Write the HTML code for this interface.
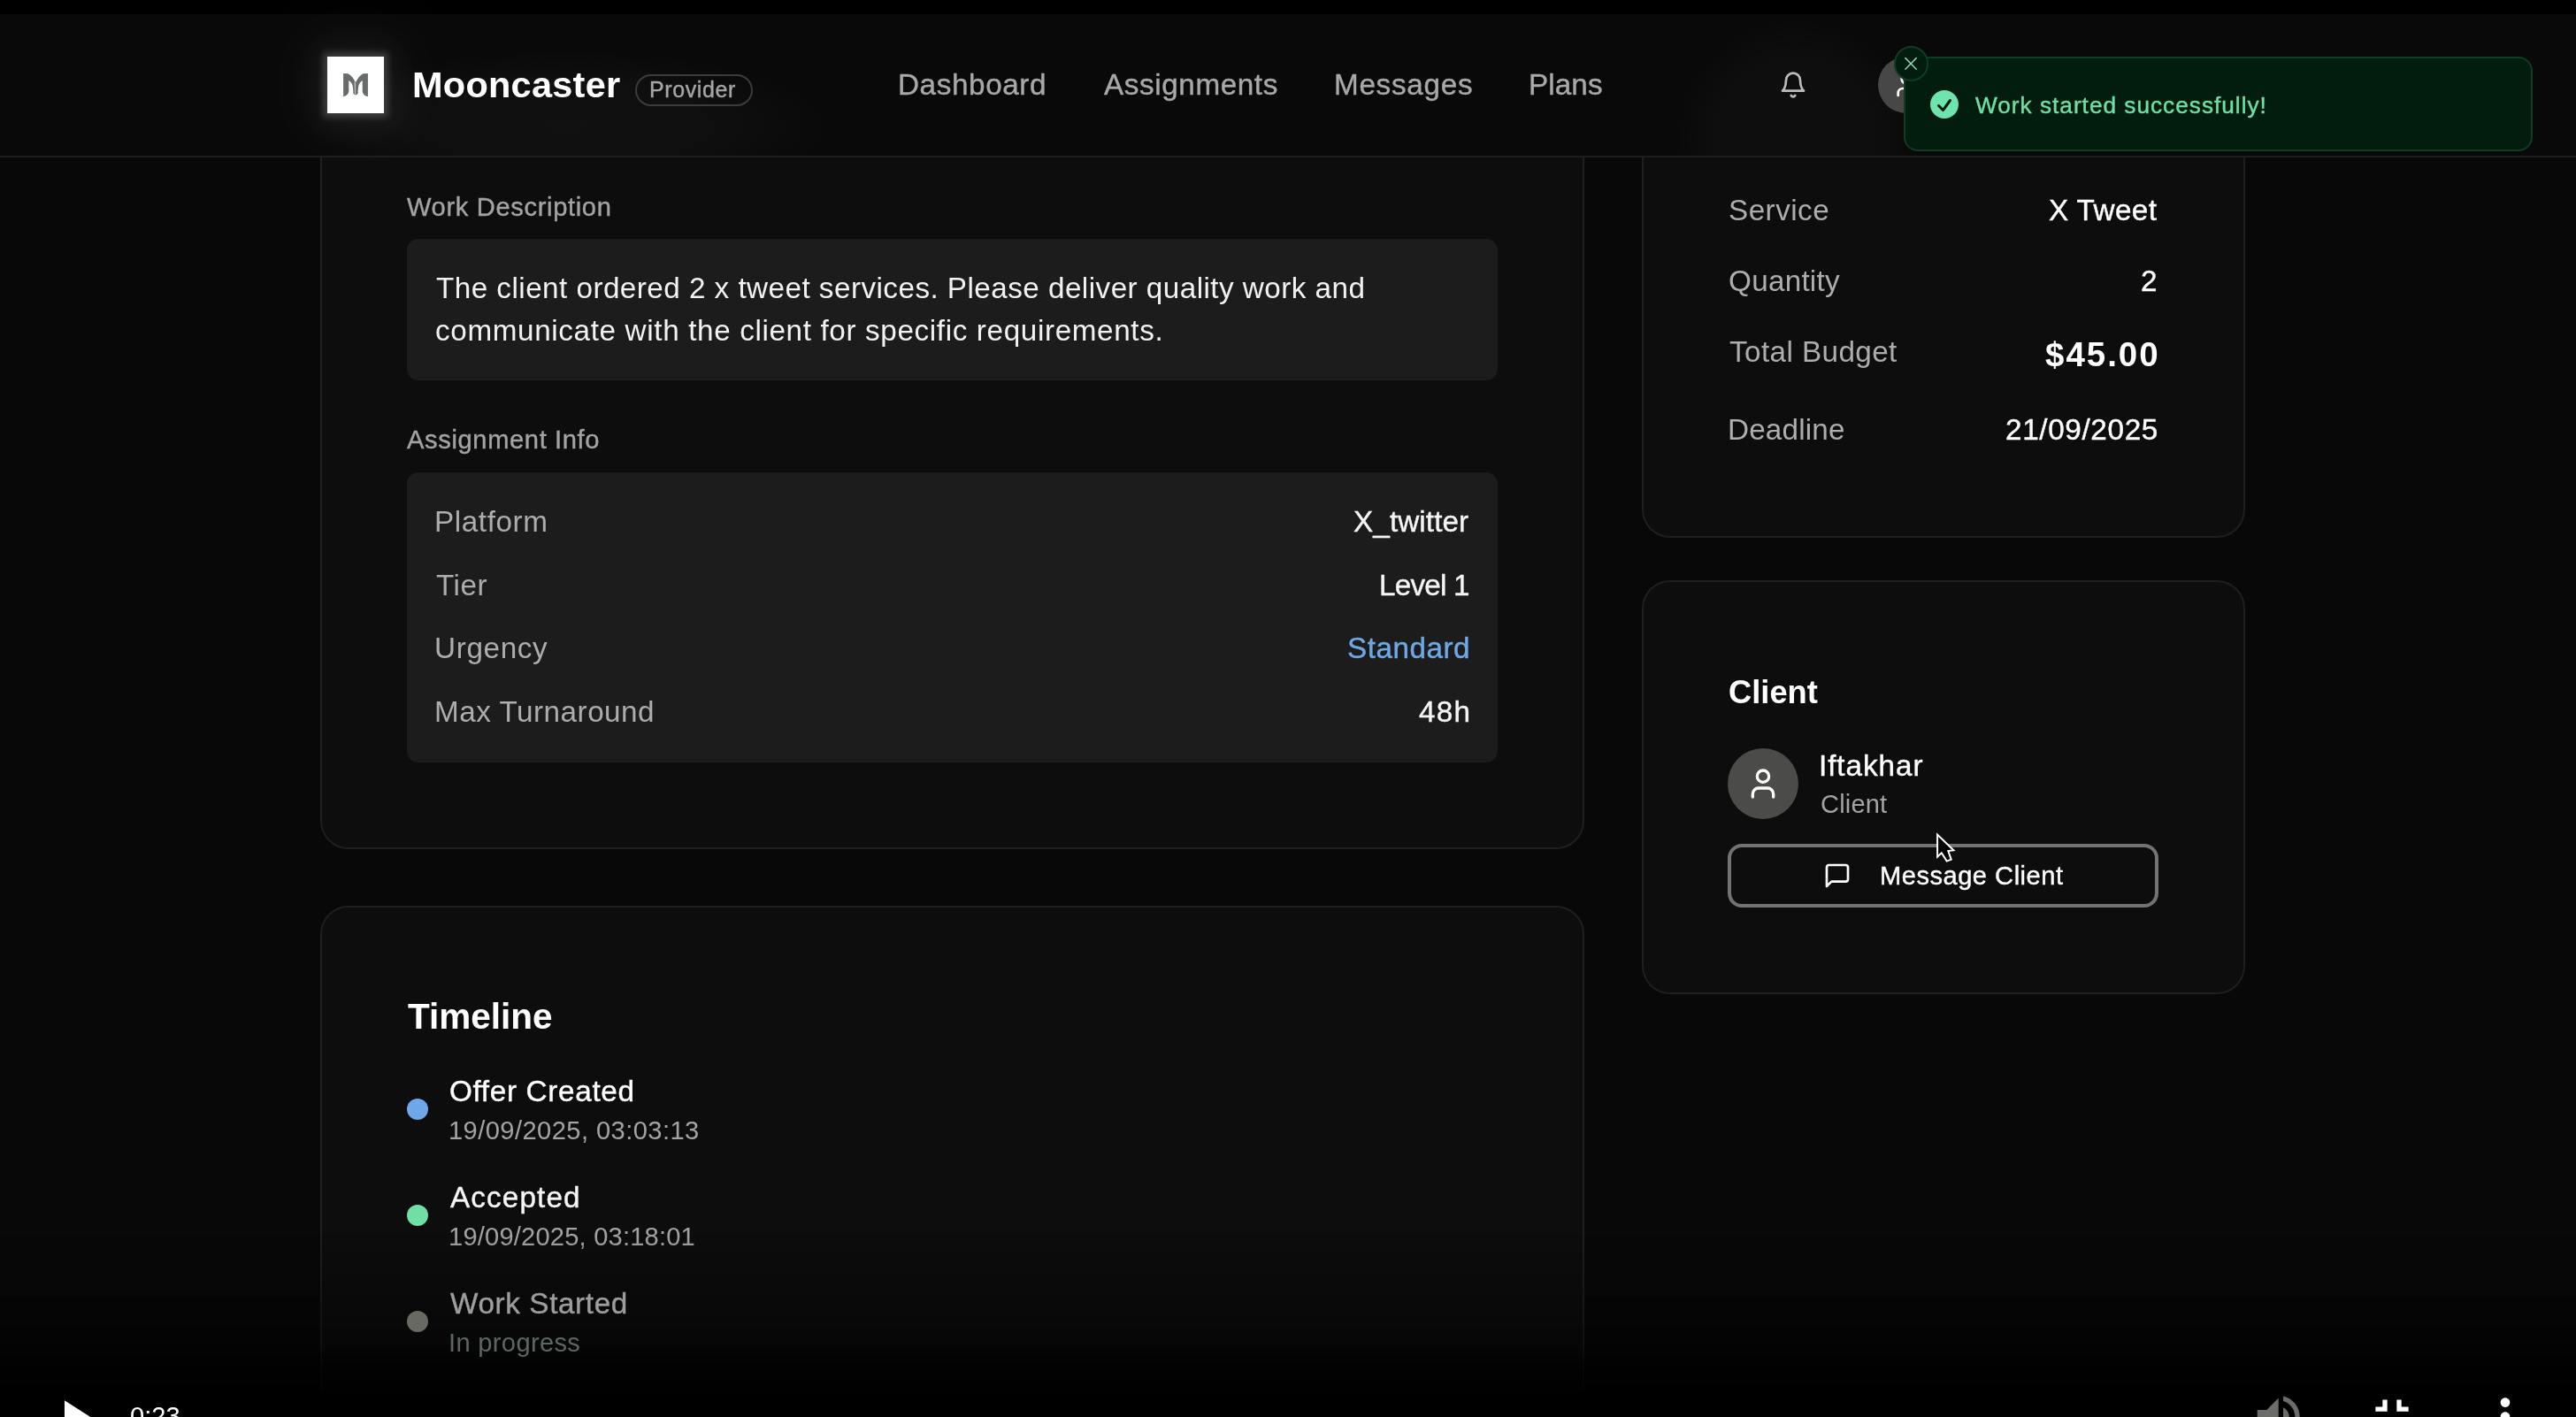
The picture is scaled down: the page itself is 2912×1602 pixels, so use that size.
<!DOCTYPE html>
<html><head><meta charset="utf-8"><title>Mooncaster</title>
<style>
html,body{margin:0;padding:0;background:#000;}
body{width:2912px;height:1602px;position:relative;overflow:hidden;font-family:"Liberation Sans",sans-serif;}
.abs{position:absolute;box-sizing:border-box;}
.t{will-change:transform;position:absolute;white-space:pre;line-height:1;font-family:"Liberation Sans",sans-serif;z-index:30;}
#frame{left:0;top:16px;width:2912px;height:1558px;background:#080808;overflow:hidden;}
.card{background:#0d0d0d;border:2px solid #1f1f1f;border-radius:32px;}
.box{background:#1c1c1c;border-radius:13px;}
#header{left:0;top:16px;width:2912px;height:162px;background:radial-gradient(circle at 2030px 140px,rgba(255,255,255,0.024) 0,rgba(255,255,255,0.02) 95px,rgba(255,255,255,0) 135px),radial-gradient(ellipse 300px 85px at 640px 125px,rgba(255,255,255,0.03) 0,rgba(255,255,255,0.022) 60%,rgba(255,255,255,0) 100%),#090909;border-bottom:2px solid #1d1d1d;z-index:20;}
</style></head><body>
<div id="frame" class="abs"></div>
<!-- cards -->
<div class="abs card" style="left:362px;top:100px;width:1429px;height:860px;z-index:5"></div>
<div class="abs card" style="left:362px;top:1024px;width:1429px;height:700px;z-index:5"></div>
<div class="abs card" style="left:1856px;top:100px;width:682px;height:508px;z-index:5"></div>
<div class="abs card" style="left:1856px;top:656px;width:682px;height:468px;z-index:5"></div>
<!-- inner boxes -->
<div class="abs box" style="left:460px;top:270px;width:1233px;height:160px;z-index:6"></div>
<div class="abs box" style="left:460px;top:534px;width:1233px;height:328px;z-index:6"></div>
<!-- timeline dots -->
<div class="abs" style="left:460px;top:1241.6px;width:24px;height:24px;border-radius:50%;background:#6fa8ea;z-index:7"></div>
<div class="abs" style="left:460px;top:1362px;width:24px;height:24px;border-radius:50%;background:#6ee0a5;z-index:7"></div>
<div class="abs" style="left:460px;top:1482px;width:24px;height:24px;border-radius:50%;background:#696963;z-index:45"></div>
<!-- client avatar -->
<div class="abs" style="left:1953px;top:846px;width:80px;height:80px;border-radius:50%;background:#4b4b49;z-index:7"></div>
<svg class="abs" style="left:1973px;top:866px;z-index:8" width="40" height="40" viewBox="0 0 24 24" fill="none" stroke="#fff" stroke-width="2" stroke-linecap="round" stroke-linejoin="round"><path d="M19 21v-2a4 4 0 0 0-4-4H9a4 4 0 0 0-4 4v2"/><circle cx="12" cy="7" r="4"/></svg>
<!-- message button -->
<div class="abs" style="left:1953px;top:953.5px;width:487px;height:72px;border:4px solid #727472;border-radius:16px;z-index:7"></div>
<svg class="abs" style="left:2060.8px;top:974px;z-index:8" width="32" height="32" viewBox="0 0 24 24" fill="none" stroke="#fff" stroke-width="2" stroke-linecap="round" stroke-linejoin="round"><path d="M21 15a2 2 0 0 1-2 2H7l-4 4V5a2 2 0 0 1 2-2h14a2 2 0 0 1 2 2z"/></svg>
<!-- header -->
<div id="header" class="abs"></div>
<div class="abs" style="left:370px;top:64px;width:64px;height:64px;background:#fff;z-index:22;box-shadow:0 0 7px 5px rgba(255,255,255,0.17),0 0 40px 18px rgba(255,255,255,0.05),0 0 90px 40px rgba(255,255,255,0.025)"></div>
<svg class="abs" style="left:370px;top:64px;z-index:23" width="64" height="64" viewBox="0 0 64 64"><g fill="#676b69"><path d="M18.100 19L23.400 19.200C27 21 30 25 32 29.200L32 43.600C30.500 43 29.300 42 29.300 41C29.500 38 29 34 28.200 31.500C27.300 29.500 25.500 27.500 24.300 27L24.300 39.200C24 42 21.500 44.500 18.700 45L18.100 45Z"/><path d="M45.900 19L40.600 19.200C37 21 34 25 32 29.200L32 43.600C33.500 43 34.700 42 34.700 41C34.500 38 35 34 35.800 31.500C36.700 29.500 38.500 27.500 39.700 27L39.700 39.200C40 42 42.500 44.500 45.300 45L45.900 45Z"/></g><path d="M30.600 27.500L32 29.500L32 43.200L31 42.400Z" fill="#c3c7c5"/></svg>
<div class="abs" style="left:717.5px;top:84px;width:133px;height:36px;border:2px solid #3a3d3d;border-radius:18px;z-index:22"></div>
<svg class="abs" style="left:2011.2px;top:79.8px;z-index:22" width="32" height="32" viewBox="0 0 24 24" fill="none" stroke="#bcbcbc" stroke-width="2" stroke-linecap="round" stroke-linejoin="round"><path d="M6 8a6 6 0 0 1 12 0c0 7 3 9 3 9H3s3-2 3-9"/><path d="M10.3 21a1.94 1.94 0 0 0 3.4 0"/></svg>
<div class="abs" style="left:2123px;top:64px;width:64px;height:64px;border-radius:50%;background:#474747;z-index:22"></div>
<svg class="abs" style="left:2139px;top:80px;z-index:23" width="32" height="32" viewBox="0 0 24 24" fill="none" stroke="#fff" stroke-width="2" stroke-linecap="round" stroke-linejoin="round"><path d="M19 21v-2a4 4 0 0 0-4-4H9a4 4 0 0 0-4 4v2"/><circle cx="12" cy="7" r="4"/></svg>
<!-- toast -->
<div class="abs" style="left:2152.4px;top:64px;width:711px;height:106.5px;background:#021c0d;border:2px solid #0e3d24;border-radius:16px;z-index:25"></div>
<div class="abs" style="left:2140.5px;top:52px;width:39.5px;height:39.5px;background:#021c0d;border:2px solid #0e3d24;border-radius:50%;z-index:26"></div>
<svg class="abs" style="left:2148px;top:60px;z-index:27" width="24" height="24" viewBox="0 0 24 24" fill="none" stroke="#86d6ae" stroke-width="1.5" stroke-linecap="round"><path d="M5.900 5.600L18.300 18.200M18.300 5.600L5.900 18.200"/></svg>
<svg class="abs" style="left:2178px;top:98px;z-index:27" width="40" height="40" viewBox="0 0 20 20" fill="#6fe3ad"><path fill-rule="evenodd" clip-rule="evenodd" d="M10 18a8 8 0 100-16 8 8 0 000 16zm3.857-9.809a.75.75 0 00-1.214-.882l-3.483 4.79-1.88-1.88a.75.75 0 10-1.06 1.061l2.5 2.5a.75.75 0 001.137-.089l4-5.5z"/></svg>
<!-- bottom gradient + controls -->
<div class="abs" style="left:0;top:1394px;width:2912px;height:180px;z-index:40;background:linear-gradient(to bottom,rgba(0,0,0,0) 0%,rgba(0,0,0,0.28) 45%,rgba(0,0,0,0.45) 68%,rgba(0,0,0,0.8) 86%,rgba(0,0,0,0.93) 100%)"></div>
<div class="abs" style="left:0;top:1574px;width:2912px;height:28px;background:#000;z-index:41"></div>
<svg class="abs" style="left:0;top:1560px;z-index:50" width="2912" height="42" viewBox="0 1560 2912 42">
 <g transform="translate(51.6 1569.9) scale(2.6667)" fill="#fff"><path d="M8 5v14l11-7z"/></g>
 <g transform="translate(2543.7 1569.9) scale(2.6667)" fill="#6c6c68"><path d="M3 9v6h4l5 5V4L7 9H3zm13.500 3c0-1.770-1.020-3.290-2.500-4.030v8.050c1.480-.730 2.500-2.250 2.500-4.020zM14 3.230v2.060c2.890.860 5 3.540 5 6.710s-2.110 5.850-5 6.710v2.060c4.010-.910 7-4.490 7-8.770s-2.990-7.860-7-8.770z"/></g>
 <g transform="translate(2672 1569.2) scale(2.6667)" fill="#fff"><path d="M5 16h3v3h2v-5H5v2zm3-8H5v2h5V5H8v3zm6 11h2v-3h3v-2h-5v5zm2-11V5h-2v5h5V8h-3z"/></g>
 <g transform="translate(2800 1569.6) scale(2.6667)" fill="#fff"><path d="M12 8c1.100 0 2-.900 2-2s-.900-2-2-2-2 .900-2 2 .900 2 2 2zm0 2c-1.100 0-2 .900-2 2s.900 2 2 2 2-.900 2-2-.900-2-2-2zm0 6c-1.100 0-2 .900-2 2s.900 2 2 2 2-.900 2-2-.900-2-2-2z"/></g>
</svg>
<!-- cursor -->
<svg class="abs" style="left:2180px;top:935px;z-index:60" width="40" height="50" viewBox="2180 935 40 50"><path d="M2190.100 943.600L2190.100 968.600L2194.800 964.200L2200.700 973.600L2205.700 971.600L2202.300 962L2208.400 961.300Z" fill="#000" stroke="#fff" stroke-width="2" stroke-linejoin="miter"/></svg>
<span class="t" style="left:465.50px;top:74.87px;font-size:41.5px;font-weight:bold;color:#ffffff;z-index:30;letter-spacing:0.249px;">Mooncaster</span>
<span class="t" style="left:734.00px;top:88.87px;font-size:24.96px;color:#a6a6a6;z-index:30;letter-spacing:0.628px;-webkit-text-stroke:0.4px currentColor;">Provider</span>
<span class="t" style="left:1015.00px;top:79.13px;font-size:33.28px;color:#a8a8a8;z-index:30;letter-spacing:0.595px;-webkit-text-stroke:0.4px currentColor;">Dashboard</span>
<span class="t" style="left:1247.80px;top:79.13px;font-size:33.28px;color:#a8a8a8;z-index:30;letter-spacing:0.590px;-webkit-text-stroke:0.4px currentColor;">Assignments</span>
<span class="t" style="left:1508.30px;top:79.13px;font-size:33.28px;color:#a8a8a8;z-index:30;letter-spacing:0.703px;-webkit-text-stroke:0.4px currentColor;">Messages</span>
<span class="t" style="left:1728.40px;top:79.13px;font-size:33.28px;color:#a8a8a8;z-index:30;letter-spacing:0.080px;-webkit-text-stroke:0.4px currentColor;">Plans</span>
<span class="t" style="left:460.30px;top:219.65px;font-size:29.12px;color:#a3a3a3;z-index:30;letter-spacing:0.654px;-webkit-text-stroke:0.4px currentColor;">Work Description</span>
<span class="t" style="left:493.00px;top:309.33px;font-size:33.28px;color:#f2f2f2;z-index:30;letter-spacing:0.452px;">The client ordered 2 x tweet services. Please deliver quality work and</span>
<span class="t" style="left:492.00px;top:356.73px;font-size:33.28px;color:#f2f2f2;z-index:30;letter-spacing:0.628px;">communicate with the client for specific requirements.</span>
<span class="t" style="left:460.30px;top:483.35px;font-size:29.12px;color:#a3a3a3;z-index:30;letter-spacing:0.626px;-webkit-text-stroke:0.4px currentColor;">Assignment Info</span>
<span class="t" style="left:491.00px;top:572.83px;font-size:33.28px;color:#adadad;z-index:30;letter-spacing:0.580px;">Platform</span>
<span class="t" style="left:493.00px;top:644.53px;font-size:33.28px;color:#adadad;z-index:30;letter-spacing:0.475px;">Tier</span>
<span class="t" style="left:491.00px;top:716.43px;font-size:33.28px;color:#adadad;z-index:30;letter-spacing:0.644px;">Urgency</span>
<span class="t" style="left:491.00px;top:788.23px;font-size:33.28px;color:#adadad;z-index:30;letter-spacing:0.490px;">Max Turnaround</span>
<span class="t" style="left:1529.90px;top:572.83px;font-size:33.28px;color:#f5f5f5;z-index:30;letter-spacing:0.096px;-webkit-text-stroke:0.4px currentColor;">X_twitter</span>
<span class="t" style="left:1559.00px;top:644.53px;font-size:33.28px;color:#f5f5f5;z-index:30;letter-spacing:-0.795px;-webkit-text-stroke:0.4px currentColor;">Level 1</span>
<span class="t" style="left:1523.00px;top:716.43px;font-size:33.28px;color:#6ea9e6;z-index:30;letter-spacing:0.498px;-webkit-text-stroke:0.4px currentColor;">Standard</span>
<span class="t" style="left:1603.60px;top:788.23px;font-size:33.28px;color:#f5f5f5;z-index:30;letter-spacing:1.199px;-webkit-text-stroke:0.4px currentColor;">48h</span>
<span class="t" style="left:461.00px;top:1129.42px;font-size:40.5px;font-weight:bold;color:#ffffff;z-index:30;letter-spacing:-0.005px;">Timeline</span>
<span class="t" style="left:507.90px;top:1217.03px;font-size:33.28px;color:#ffffff;z-index:30;letter-spacing:0.673px;-webkit-text-stroke:0.4px currentColor;">Offer Created</span>
<span class="t" style="left:506.90px;top:1263.85px;font-size:29.12px;color:#a3a3a3;z-index:30;letter-spacing:0.427px;">19/09/2025, 03:03:13</span>
<span class="t" style="left:508.90px;top:1337.43px;font-size:33.28px;color:#f5f5f5;z-index:30;letter-spacing:1.129px;-webkit-text-stroke:0.4px currentColor;">Accepted</span>
<span class="t" style="left:506.90px;top:1383.85px;font-size:29.12px;color:#a3a3a3;z-index:30;letter-spacing:0.190px;">19/09/2025, 03:18:01</span>
<span class="t" style="left:508.90px;top:1457.13px;font-size:33.28px;color:#9e9e9e;z-index:45;letter-spacing:0.618px;-webkit-text-stroke:0.4px currentColor;">Work Started</span>
<span class="t" style="left:506.90px;top:1504.35px;font-size:29.12px;color:#5e6565;z-index:45;letter-spacing:0.324px;">In progress</span>
<span class="t" style="left:1953.50px;top:220.83px;font-size:33.28px;color:#adadad;z-index:30;letter-spacing:0.463px;">Service</span>
<span class="t" style="left:2316.30px;top:220.83px;font-size:33.28px;color:#ffffff;z-index:30;letter-spacing:0.394px;-webkit-text-stroke:0.4px currentColor;">X Tweet</span>
<span class="t" style="left:1953.50px;top:301.13px;font-size:33.28px;color:#adadad;z-index:30;letter-spacing:0.250px;">Quantity</span>
<span class="t" style="left:2420.00px;top:301.13px;font-size:33.28px;color:#ffffff;z-index:30;letter-spacing:0.000px;-webkit-text-stroke:0.4px currentColor;">2</span>
<span class="t" style="left:1954.50px;top:380.83px;font-size:33.28px;color:#adadad;z-index:30;letter-spacing:0.400px;">Total Budget</span>
<span class="t" style="left:2312.40px;top:382.41px;font-size:38.5px;font-weight:bold;color:#ffffff;z-index:30;letter-spacing:1.971px;">$45.00</span>
<span class="t" style="left:1952.50px;top:468.53px;font-size:33.28px;color:#adadad;z-index:30;letter-spacing:0.170px;">Deadline</span>
<span class="t" style="left:2266.80px;top:468.53px;font-size:33.28px;color:#ffffff;z-index:30;letter-spacing:0.646px;-webkit-text-stroke:0.4px currentColor;">21/09/2025</span>
<span class="t" style="left:1953.50px;top:764.97px;font-size:36.3px;font-weight:bold;color:#ffffff;z-index:30;letter-spacing:0.012px;">Client</span>
<span class="t" style="left:2055.70px;top:848.63px;font-size:33.28px;color:#ffffff;z-index:30;letter-spacing:0.934px;-webkit-text-stroke:0.4px currentColor;">Iftakhar</span>
<span class="t" style="left:2057.70px;top:894.55px;font-size:29.12px;color:#a3a3a3;z-index:30;letter-spacing:0.153px;">Client</span>
<span class="t" style="left:2124.70px;top:975.55px;font-size:29.12px;color:#ffffff;z-index:30;letter-spacing:0.489px;-webkit-text-stroke:0.4px currentColor;">Message Client</span>
<span class="t" style="left:2233.40px;top:105.62px;font-size:26.2px;color:#6ee0a8;z-index:30;letter-spacing:1.008px;-webkit-text-stroke:0.4px currentColor;">Work started successfully!</span>
<span class="t" style="left:146.50px;top:1587.35px;font-size:29.12px;color:#ffffff;z-index:55;letter-spacing:0.011px;">0:23</span>
</body></html>
